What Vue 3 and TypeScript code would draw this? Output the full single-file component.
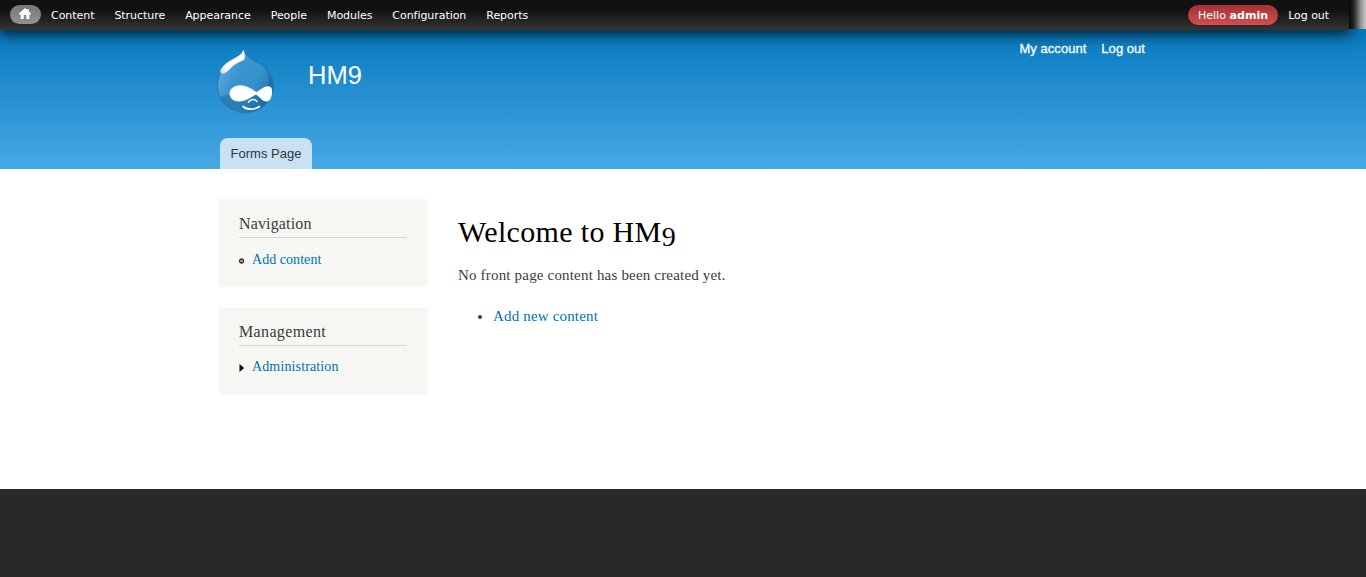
<script setup lang="ts">
const menu: string[] = ['Content', 'Structure', 'Appearance', 'People', 'Modules', 'Configuration', 'Reports']
</script>

<template>
  <div class="page">
    <nav class="toolbar">
      <a class="home">
        <svg width="12" height="11" viewBox="0 0 12 11"><path d="M6 0L0 5.6V6.5H1.7V11H4.7V7H7.3V11H10.3V6.5H12V5.6L9.8 3.6V1H8.4V2.3Z" fill="#fff" /></svg>
      </a>
      <a v-for="item in menu" :key="item" class="item">{{ item }}</a>
      <span class="user">Hello <strong>admin</strong></span>
      <a class="logout">Log out</a>
    </nav>
    <header class="header">
      <div class="wrap">
        <div class="brand">
          <svg class="logo" width="60" height="65" viewBox="0 0 60 65">
            <defs>
              <linearGradient id="drop" x1="0" y1="0.2" x2="1" y2="0.8">
                <stop offset="0" stop-color="#6aacd9" />
                <stop offset="0.35" stop-color="#3a94cf" />
                <stop offset="0.65" stop-color="#3690cb" />
                <stop offset="1" stop-color="#1d6fab" />
              </linearGradient>
              <linearGradient id="shine" x1="0" y1="1" x2="1" y2="0">
                <stop offset="0" stop-color="#b9dbf0" />
                <stop offset="0.25" stop-color="#fff" />
                <stop offset="1" stop-color="#fff" />
              </linearGradient>
            </defs>
            <path d="M27.500 0.500C29 8 38 11 45 15.500C53 20.500 57.500 28 57.500 36.500C57.500 52 45 63.500 29.500 63.500C14 63.500 1.500 52 1.500 37C1.500 26 7 18.500 13 14.500C20 10 26 7.500 27.500 0.500Z" fill="url(#drop)" stroke="#2a71a3" stroke-width="0.9" />
            <path d="M48 18C55 27 54 38 46 43C34 50 16 42 4 48C9 58 19 63 29.500 63C45 63 57 52 57 37C57 29 53 22 48 18Z" fill="#075487" opacity="0.3" />
            <path d="M27.500 1C28.500 5 30 9 27.500 11C24 13 19.500 14 15.700 17.800C12.500 21 10 24.500 6.500 24.500C4 24.500 4 21.500 6 19C9 14.500 13 12.300 17 10.200C22 7.500 26 5.500 27.500 1Z" fill="url(#shine)" stroke="#fff" stroke-opacity="0.5" stroke-width="0.6" />
            <path d="M24 36.300C31 36.300 36 40.500 40.500 43C44.500 41 48 37.300 52 37.300C55.500 37.300 56.500 40 56 44.500C55.500 49.500 53.500 52.500 50.500 52.500C46 52.500 43.500 47.500 40 45.500C35 48 30 52.500 23 52.500C16.500 52.500 13.500 48.500 13.500 44.500C13.500 40 18 36.300 24 36.300Z" fill="#fff" />
            <path d="M32.500 53C35.500 49.700 39 49.700 41 52.500" fill="none" stroke="#fff" stroke-width="1.500" stroke-linecap="round" />
            <path d="M27 57.500C31 61 38.500 61 43.500 57.500" fill="none" stroke="#fff" stroke-width="1.700" stroke-linecap="round" />
          </svg>
          <div class="site">HM9</div>
          <div class="account"><a>My account</a><a>Log out</a></div>
        </div>
        <a class="tab">Forms Page</a>
      </div>
    </header>
    <main class="wrap body">
      <aside>
        <section class="block">
          <h2>Navigation</h2>
          <div class="entry">
            <svg width="6" height="6" viewBox="0 0 6 6"><circle cx="2.500" cy="3" r="2" fill="#aaa" stroke="#333" stroke-width="1.300" /></svg>
            <a>Add content</a>
          </div>
        </section>
        <section class="block">
          <h2 class="management">Management</h2>
          <div class="entry admin">
            <svg width="6" height="8" viewBox="0 0 6 8"><path d="M0.500 0L5 4L0.500 8Z" fill="#000" /></svg>
            <a>Administration</a>
          </div>
        </section>
      </aside>
      <article>
        <h1>Welcome to HM<span class="old-nine">9</span></h1>
        <p>No front page content has been created yet.</p>
        <div class="new"><i></i><a>Add new content</a></div>
      </article>
    </main>
    <footer></footer>
  </div>
</template>

<style>
body { margin: 0; overflow: hidden; }
</style>

<style scoped>
* { box-sizing: border-box; }
.page { height: 577px; overflow: hidden; display: flex; flex-direction: column; background: #fff; font-family: "Liberation Serif", serif; color: #3b3b3b; }
.toolbar { flex: none; position: relative; z-index: 2; width: 1349px; height: 30px; margin-bottom: -1px; display: flex; align-items: center; padding: 0 20px 0 10px; background: linear-gradient(#111 0, #111 32%, #343434 100%); box-shadow: 0 1px 16px 2px rgba(0, 0, 0, 0.9); font: 11px/20px "DejaVu Sans", sans-serif; letter-spacing: -0.05px; color: #fff; }
.toolbar::after { content: ""; position: absolute; left: 100%; top: 0; width: 17px; height: 29px; background: linear-gradient(90deg, #060606, #2a2a2a 30%, #999 72%, #c8c8c8); }
.home { width: 31px; height: 19px; border-radius: 10px; background: linear-gradient(#777, #929292); display: flex; align-items: flex-start; justify-content: center; padding: 3px 1px 0 0; margin: -1px 10px 0 0; }
.item, .logout { padding-top: 1px; }
.item { margin-right: 20px; }
.user { margin-left: auto; height: 20px; padding: 1px 10px 0; line-height: 19px; letter-spacing: 0.05px; border-radius: 10px; background: linear-gradient(#a73035, #d14e4e); margin-right: 10px; }
.header { flex: none; height: 140px; background: linear-gradient(#0779bf, #48a9e4); font-family: "Liberation Sans", sans-serif; }
.wrap { width: 930px; margin: 0 auto; }
.header .wrap { height: 140px; display: flex; flex-direction: column; align-items: flex-start; }
.brand { width: 100%; height: 109px; display: flex; align-items: flex-start; }
.logo { margin: 20px 0 0 -2px; }
.site { margin: 32px 0 0 32px; font-size: 25.5px; line-height: 29px; color: #fff; }
.account { margin: 11px 3px 0 auto; display: flex; gap: 15px; font-size: 13px; line-height: 17px; letter-spacing: 0.04px; color: #fff; -webkit-text-stroke: 0.3px #fff; }
.tab { margin-left: 2px; height: 31px; width: 92px; text-align: center; font-size: 13px; line-height: 31px; color: #333; background: #c8e2f4; border-radius: 8px 8px 0 0; }
.body { height: 320px; flex: none; display: flex; padding-top: 30px; }
aside { width: 210px; display: flex; flex-direction: column; gap: 20px; flex: none; }
.block { height: 88px; padding: 15px 20px; background: #f6f6f2; border: 1px solid #f9f9f9; }
h2 { margin: 0 0 13px; height: 23px; border-bottom: 1px solid #d6d6d6; font-size: 16px; line-height: 18px; font-weight: 400; letter-spacing: 0.15px; }
h2.management { letter-spacing: 0.35px; }
.entry { display: flex; align-items: center; gap: 7px; font-size: 14px; line-height: 18px; letter-spacing: 0.05px; }
.entry.admin { margin-top: -1px; letter-spacing: 0.13px; }
.entry svg { margin-top: 1px; }
.entry.admin svg { margin-top: 2px; }
a { color: inherit; }
.body a { color: #0071b3; }
article { margin-left: 30px; }
h1 { margin: 15px 0 0; height: 36px; font-size: 30px; line-height: 36px; font-weight: 400; letter-spacing: 0.34px; color: #000; }
.old-nine { display: inline-block; font-size: 28px; line-height: 1; transform: translateY(4px); }
p { margin: 15px 0 0; font-size: 15px; line-height: 20px; letter-spacing: 0.18px; }
.new { margin-top: 21px; display: flex; align-items: center; font-size: 15px; line-height: 20px; letter-spacing: 0.17px; }
.new i { width: 4px; height: 4px; border-radius: 50%; background: #3b3b3b; margin: 2px 11px 0 20px; }
footer { flex: 1; background: #292929; }
</style>
